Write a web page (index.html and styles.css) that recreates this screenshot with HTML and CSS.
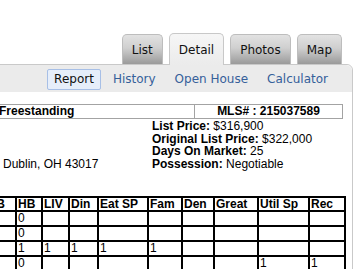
FILE: index.html
```html
<!DOCTYPE html>
<html lang="en">
<head>
  <meta charset="UTF-8">
  <title>Listing Detail</title>
  <link rel="stylesheet" href="styles.css">
</head>
<body>

<div class="tabs">
  <a class="tab" href="#">List</a>
  <a class="tab active" href="#">Detail</a>
  <a class="tab" href="#">Photos</a>
  <a class="tab" href="#">Map</a>
</div>

<div class="panel">
  <div class="subnav">
    <a class="current" href="#">Report</a>
    <a href="#">History</a>
    <a href="#">Open House</a>
    <a href="#">Calculator</a>
  </div>

  <div class="content">
    <table class="prop">
      <tr>
        <td class="style-cell">Freestanding</td>
        <td class="mls-cell">MLS# : 215037589</td>
      </tr>
    </table>

    <div class="info">
      <div class="address">
        <div>&nbsp;</div>
        <div>&nbsp;</div>
        <div>&nbsp;</div>
        <div>Dublin, OH 43017</div>
      </div>
      <div class="prices">
        <div><b>List Price:</b> $316,900</div>
        <div><b>Original List Price:</b> $322,000</div>
        <div><b>Days On Market:</b> 25</div>
        <div><b>Possession:</b> Negotiable</div>
      </div>
    </div>

    <table class="rooms">
      <colgroup>
        <col><col><col><col><col><col><col><col><col><col><col>
      </colgroup>
      <tr>
        <th>BR</th><th>FB</th><th>HB</th><th>LIV</th><th>Din</th><th>Eat SP</th>
        <th>Fam</th><th>Den</th><th>Great</th><th>Util Sp</th><th>Rec</th>
      </tr>
      <tr>
        <td></td><td></td><td>0</td><td></td><td></td><td></td>
        <td></td><td></td><td></td><td></td><td></td>
      </tr>
      <tr>
        <td></td><td></td><td>0</td><td></td><td></td><td></td>
        <td></td><td></td><td></td><td></td><td></td>
      </tr>
      <tr>
        <td></td><td></td><td>1</td><td>1</td><td>1</td><td>1</td>
        <td>1</td><td></td><td></td><td></td><td></td>
      </tr>
      <tr>
        <td></td><td></td><td>0</td><td></td><td></td><td></td>
        <td></td><td></td><td></td><td>1</td><td>1</td>
      </tr>
    </table>
  </div>
</div>

</body>
</html>
```

FILE: styles.css
```css
body {
  margin: 0;
  background: #fff;
  font-family: "Liberation Sans", Arial, sans-serif;
  font-size: 12px;
  color: #000;
  overflow: hidden;
}

/* top tabs */
.tabs {
  display: flex;
  justify-content: flex-end;
  align-items: flex-end;
  gap: 6px;
  padding: 33px 18px 0 0;
  height: 31px;
}

.tab {
  display: block;
  height: 30px;
  line-height: 31px;
  padding: 0 9px;
  border: 1px solid #bdbdbd;
  border-bottom: none;
  border-radius: 5px 5px 0 0;
  background: linear-gradient(#e2e2e2, #cfcfcf 45%, #9a9a9a);
  font-family: "DejaVu Sans", sans-serif;
  font-size: 12px;
  color: #111;
  text-decoration: none;
  box-sizing: border-box;
}

.tab.active {
  height: 32px;
  line-height: 33px;
  margin-bottom: -1px;
  background: linear-gradient(#f6f6f6, #ebebeb);
  border-color: #c8c8c8;
}

/* panel */
.panel {
  margin: 0 7px 0 -40px;
  border: 1px solid #c9c9c9;
  border-radius: 0 6px 0 0;
  background: #fff;
  min-height: 220px;
}

.subnav {
  display: flex;
  justify-content: flex-end;
  gap: 5px;
  padding: 4px 17px 2px 0;
  background: #ebebeb;
  border-radius: 0 6px 0 0;
}

.subnav a {
  display: block;
  padding: 0 6px;
  line-height: 19px;
  border: 1px solid transparent;
  border-radius: 2px;
  font-family: "DejaVu Sans", sans-serif;
  font-size: 12px;
  color: #35609a;
  text-decoration: none;
}

.subnav a.current {
  background: #e6eefa;
  border-color: #a7bfe6;
  color: #111;
}

.content {
  padding: 12px 9px 0 8px;
}

/* property row */
.prop {
  width: 100%;
  border-collapse: collapse;
  border: 1px solid #a3a3a3;
  margin-bottom: 1px;
}

.prop td {
  border: 1px solid #a3a3a3;
  padding: 0;
  line-height: 13px;
  font-weight: bold;
}

.style-cell {
  width: 195px;
  padding-left: 29px !important;
}

.mls-cell {
  text-align: center;
}

/* price block */
.info {
  display: grid;
  grid-template-columns: 183px 1fr;
  line-height: 12.7px;
}

.address {
  padding-left: 34px;
}

/* rooms */
.rooms {
  width: 375px;
  margin-top: 25px;
  table-layout: fixed;
  border-collapse: separate;
  border-spacing: 0;
  border: 1px solid #000;
}

.rooms th, .rooms td {
  border: 1px solid #000;
  padding: 0 0 0 1px;
  text-align: left;
  line-height: 13px;
  height: 13px;
  white-space: nowrap;
  overflow: hidden;
}

.rooms th {
  line-height: 12px;
  height: 12px;
}

.rooms col:nth-child(1) { width: 17px; }
.rooms col:nth-child(2) { width: 29px; }
.rooms col:nth-child(3) { width: 26px; }
.rooms col:nth-child(4) { width: 27px; }
.rooms col:nth-child(5) { width: 29px; }
.rooms col:nth-child(6) { width: 50px; }
.rooms col:nth-child(7) { width: 34px; }
.rooms col:nth-child(8) { width: 32px; }
.rooms col:nth-child(9) { width: 44px; }
.rooms col:nth-child(10) { width: 51px; }
.rooms col:nth-child(11) { width: 36px; }
```
